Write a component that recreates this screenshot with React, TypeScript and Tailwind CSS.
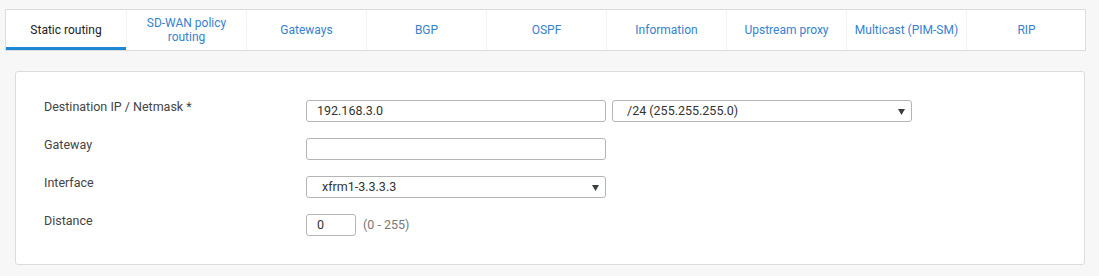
const tabs = [
  'Static routing',
  'SD-WAN policy routing',
  'Gateways',
  'BGP',
  'OSPF',
  'Information',
  'Upstream proxy',
  'Multicast (PIM-SM)',
  'RIP',
];

const Caret = () => (
  <svg width="7" height="6" viewBox="0 0 7 6" className="absolute right-[6px] top-[8px]">
    <path d="M0 0 L7 0 L3.5 6 Z" fill="#3a3f44" />
  </svg>
);

const Row = ({ label, children }: { label: string; children: React.ReactNode }) => (
  <div className="flex items-center h-[22px]">
    <div className="w-[262px] text-[12.5px] text-[#444] leading-none -mt-[8px]">{label}</div>
    <div className="flex items-center gap-[6px]">{children}</div>
  </div>
);

const Box = ({ w, text, select, pl = 'pl-[10px]' }: { w: string; text?: string; select?: boolean; pl?: string }) => (
  <div className={`relative ${w} h-[22px] border border-[#b5b5b5] rounded-[3px] bg-white flex items-center ${pl} text-[12.5px] text-[#333]`}>
    {text}
    {select && <Caret />}
  </div>
);

export default function App() {
  return (
    <div className="w-[1099px] h-[276px] bg-[#f7f7f7] pt-[9px] pl-[5px]" style={{ fontFamily: 'Roboto, "Liberation Sans", sans-serif' }}>
      <div className="flex w-[1081px] h-[42px] bg-white border border-[#dcdcdc]">
        {tabs.map((t, i) => (
          <div
            key={t}
            className={`w-[120px] shrink-0 flex items-center justify-center text-center text-[12px] leading-[14px] px-[6px] ${
              i > 0 ? 'border-l border-[#f2f2f2]' : ''
            } ${i === 0 ? 'text-[#222] border-b-[3px] border-b-[#1e88d2] pt-[3px]' : 'text-[#3482d0]'}`}
          >
            {t}
          </div>
        ))}
      </div>
      <div className="ml-[10px] mt-[20px] w-[1070px] h-[194px] bg-white border border-[#dcdcdc] rounded-[3px] pt-[28px] pl-[28px] flex flex-col gap-[16px]">
        <Row label="Destination IP / Netmask *">
          <Box w="w-[300px]" text="192.168.3.0" />
          <Box w="w-[300px]" text="/24 (255.255.255.0)" select pl="pl-[14px]" />
        </Row>
        <Row label="Gateway">
          <Box w="w-[300px]" />
        </Row>
        <Row label="Interface">
          <Box w="w-[300px]" text="xfrm1-3.3.3.3" select pl="pl-[15px]" />
        </Row>
        <Row label="Distance">
          <Box w="w-[50px]" text="0" />
          <span className="text-[12.5px] text-[#777] ml-[1px]">(0 - 255)</span>
        </Row>
      </div>
    </div>
  );
}
